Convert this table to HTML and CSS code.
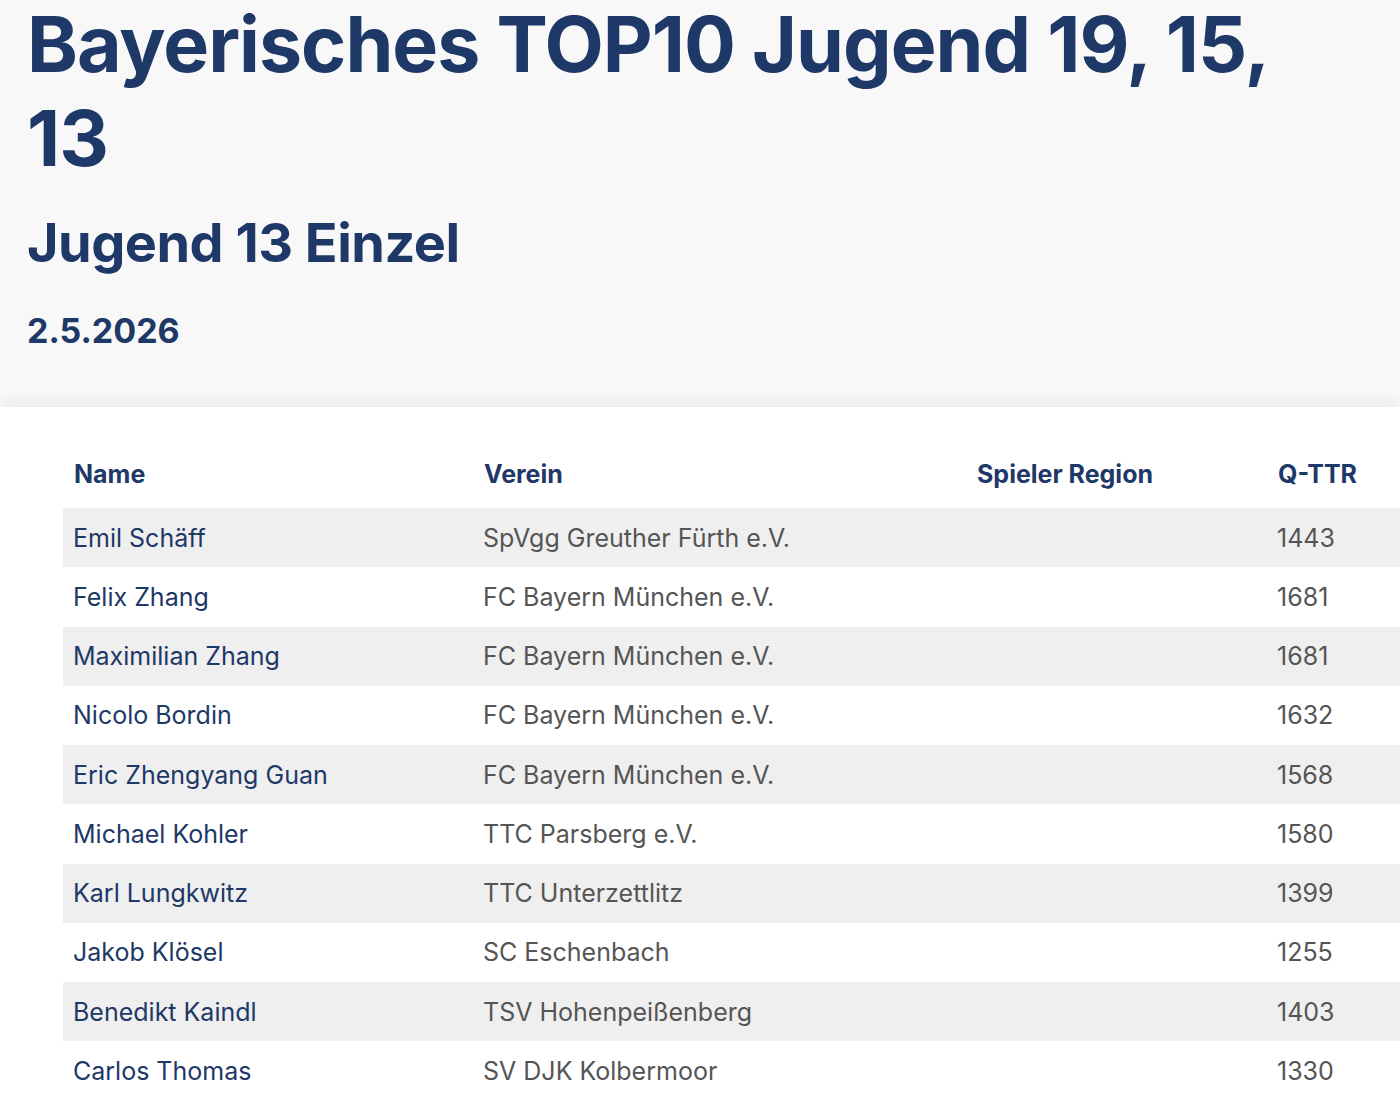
FILE: index.html
```html
<!DOCTYPE html>
<html lang="de">
<head>
<meta charset="utf-8">
<title>Bayerisches TOP10 Jugend 19, 15, 13</title>
<link rel="stylesheet" href="styles.css">
</head>
<body>
<header class="hero">
  <h1 class="hero-title">Bayerisches TOP10 Jugend 19, 15, 13</h1>
  <h2 class="hero-sub">Jugend 13 Einzel</h2>
  <p class="hero-date">2.5.2026</p>
</header>
<main class="content">
  <table class="ranking">
    <thead>
      <tr>
        <th class="col-name">Name</th>
        <th class="col-club">Verein</th>
        <th class="col-region">Spieler Region</th>
        <th class="col-ttr">Q-TTR</th>
      </tr>
    </thead>
    <tbody>
      <tr><td class="player">Emil Schäff</td><td>SpVgg Greuther Fürth e.V.</td><td></td><td>1443</td></tr>
      <tr><td class="player">Felix Zhang</td><td>FC Bayern München e.V.</td><td></td><td>1681</td></tr>
      <tr><td class="player">Maximilian Zhang</td><td>FC Bayern München e.V.</td><td></td><td>1681</td></tr>
      <tr><td class="player">Nicolo Bordin</td><td>FC Bayern München e.V.</td><td></td><td>1632</td></tr>
      <tr><td class="player">Eric Zhengyang Guan</td><td>FC Bayern München e.V.</td><td></td><td>1568</td></tr>
      <tr><td class="player">Michael Kohler</td><td>TTC Parsberg e.V.</td><td></td><td>1580</td></tr>
      <tr><td class="player">Karl Lungkwitz</td><td>TTC Unterzettlitz</td><td></td><td>1399</td></tr>
      <tr><td class="player">Jakob Klösel</td><td>SC Eschenbach</td><td></td><td>1255</td></tr>
      <tr><td class="player">Benedikt Kaindl</td><td>TSV Hohenpeißenberg</td><td></td><td>1403</td></tr>
      <tr><td class="player">Carlos Thomas</td><td>SV DJK Kolbermoor</td><td></td><td>1330</td></tr>
    </tbody>
  </table>
</main>
</body>
</html>
```

FILE: styles.css
```css
* { box-sizing: border-box; }

html, body {
  margin: 0;
  padding: 0;
  background: #ffffff;
  font-family: Inter, "Noto Sans", "Liberation Sans", sans-serif;
  overflow: hidden;
}

.hero {
  background: #f8f8f8;
  padding: 0 28px 0 27px;
  height: 407px;
}

.hero-title {
  margin: 0;
  max-width: 1290px;
  font-size: 77px;
  line-height: 94px;
  font-weight: 700;
  color: #1e3867;
  letter-spacing: -1px;
  transform: translateY(-3px);
}

.hero-sub {
  margin: 22px 0 0 0;
  font-size: 54px;
  line-height: 66px;
  font-weight: 700;
  color: #1e3867;
  letter-spacing: -0.5px;
}

.hero-date {
  margin: 33px 0 0 0;
  font-size: 34px;
  line-height: 44px;
  font-weight: 700;
  color: #1e3867;
}

.content {
  position: relative;
  background: #ffffff;
  box-shadow: 0 -6px 14px rgba(0, 0, 0, 0.06);
  padding: 33px 0 0 63px;
}

.ranking {
  width: 1400px;
  border-collapse: collapse;
  font-size: 25px;
}

.ranking th {
  text-align: left;
  font-weight: 700;
  color: #1e3867;
  height: 68px;
  padding: 0 11px;
}

.ranking td {
  height: 59.25px;
  padding: 0 11px 0 10px;
  color: #555555;
}

.ranking td.player { color: #1e3867; }

.ranking tbody tr:nth-child(odd) { background: #efefef; }

.col-name { width: 410px; }
.col-club { width: 493px; }
.col-region { width: 301px; }
.col-ttr { width: auto; }
```
